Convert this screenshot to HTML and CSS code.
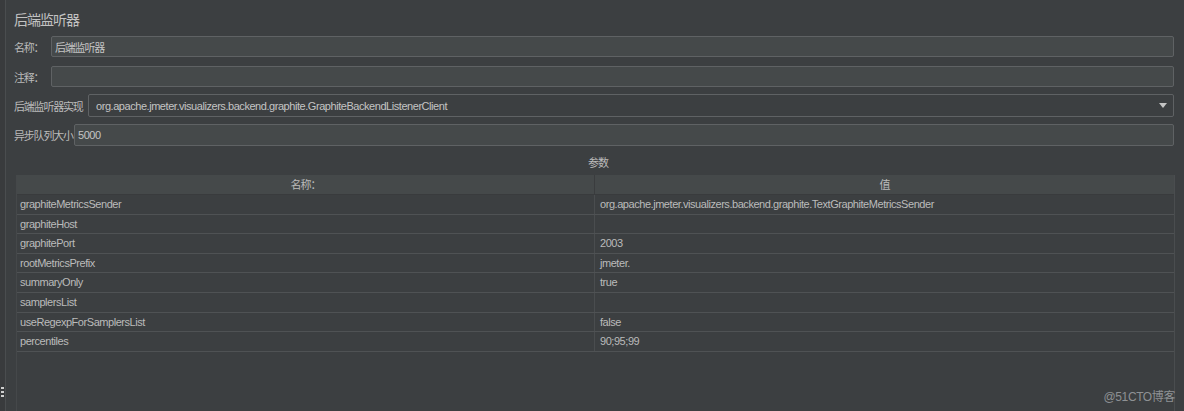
FILE: index.html
```html
<!DOCTYPE html>
<html lang="zh">
<head>
<meta charset="utf-8">
<title>后端监听器</title>
<link rel="stylesheet" href="styles.css">
</head>
<body>
<div class="app">
  <div class="splitter"><span class="grip"></span></div>
  <div class="main">
    <div class="title">后端监听器</div>
    <div class="field f-name">
      <label class="lbl">名称：</label>
      <div class="input">后端监听器</div>
    </div>
    <div class="field f-comment">
      <label class="lbl">注释：</label>
      <div class="input"></div>
    </div>
    <div class="field f-impl">
      <label class="lbl">后端监听器实现</label>
      <div class="input combo">
        <span>org.apache.jmeter.visualizers.backend.graphite.GraphiteBackendListenerClient</span>
        <svg class="arrow" width="8" height="5" viewBox="0 0 8 5"><path d="M0 0H8L4 5Z" fill="#c4c4c4"/></svg>
      </div>
    </div>
    <div class="field f-queue">
      <label class="lbl">异步队列大小</label>
      <div class="input">5000</div>
    </div>
    <div class="params-title">参数</div>
    <div class="table">
      <div class="thead">
        <div class="th">名称：</div>
        <div class="th">值</div>
      </div>
      <div class="row"><div class="td">graphiteMetricsSender</div><div class="td">org.apache.jmeter.visualizers.backend.graphite.TextGraphiteMetricsSender</div></div>
      <div class="row"><div class="td">graphiteHost</div><div class="td"></div></div>
      <div class="row"><div class="td">graphitePort</div><div class="td">2003</div></div>
      <div class="row"><div class="td">rootMetricsPrefix</div><div class="td">jmeter.</div></div>
      <div class="row"><div class="td">summaryOnly</div><div class="td">true</div></div>
      <div class="row"><div class="td">samplersList</div><div class="td"></div></div>
      <div class="row"><div class="td">useRegexpForSamplersList</div><div class="td">false</div></div>
      <div class="row"><div class="td">percentiles</div><div class="td">90;95;99</div></div>
    </div>
  </div>
  <div class="watermark">@51CTO博客</div>
</div>
</body>
</html>
```

FILE: styles.css
```css
* { box-sizing: border-box; }
html, body { margin: 0; padding: 0; }
body {
  background: #3c3f41;
  color: #bbbbbb;
  font-family: "Liberation Sans", Arial, "Noto Sans CJK SC", sans-serif;
  font-size: 11px;
  width: 1184px;
  height: 411px;
  overflow: hidden;
}
.app {
  position: relative;
  display: flex;
  height: 411px;
}
.splitter {
  width: 6px;
  flex: none;
  background: #393b3d;
  border-right: 1px solid #4a4d4f;
  display: flex;
  align-items: flex-end;
  padding-bottom: 14px;
}
.grip {
  display: block;
  width: 3px;
  height: 10px;
  margin-left: 1px;
  background: repeating-linear-gradient(#cfcfcf 0 2px, transparent 2px 4px);
}
.main {
  flex: 1;
  padding: 9px 10px 0 8px;
  display: flex;
  flex-direction: column;
}
.title {
  font-family: "Noto Sans CJK SC", sans-serif;
  font-size: 14px;
  line-height: 20px;
  height: 20px;
  letter-spacing: -1px;
  color: #c2c2c2;
}
.field {
  display: flex;
  align-items: center;
}
.lbl {
  font-family: "Noto Sans CJK SC", sans-serif;
  font-size: 11px;
  letter-spacing: -1.2px;
  white-space: nowrap;
  flex: none;
}
.f-name { margin-top: 7px; height: 21px; }
.f-name .lbl { width: 37px; }
.f-comment { margin-top: 9px; height: 21px; }
.f-comment .lbl { width: 37px; }
.f-impl { margin-top: 7px; height: 23px; }
.f-impl .lbl { width: 74px; }
.f-queue { margin-top: 7px; height: 22px; }
.f-queue .lbl { width: 60px; }
.input {
  flex: 1;
  height: 100%;
  background: #45494a;
  border: 1px solid #5f6264;
  border-radius: 2px;
  padding: 0 3px;
  display: flex;
  align-items: center;
  font-size: 11px;
  letter-spacing: -0.45px;
  white-space: nowrap;
  color: #c4c4c4;
}
.f-name .input { font-family: "Noto Sans CJK SC", sans-serif; letter-spacing: -1.2px; }
.combo {
  background: #3c3f41;
  padding-left: 7px;
  justify-content: space-between;
  padding-right: 6px;
}
.params-title {
  margin-top: 8px;
  height: 16px;
  line-height: 16px;
  text-align: center;
  font-family: "Noto Sans CJK SC", sans-serif;
  font-size: 11px;
  letter-spacing: -1px;
  padding-left: 8px;
}
.table {
  margin: 5px -1px 0 2px;
  flex: 1;
  border-left: 1px solid #45484a;
  border-right: 1px solid #4a4d4f;
}
.thead {
  display: grid;
  grid-template-columns: 577px 1fr;
  height: 20px;
  background: #45494a;
  border-bottom: 1px solid #393b3d;
}
.th {
  text-align: center;
  line-height: 19px;
  font-family: "Noto Sans CJK SC", sans-serif;
  letter-spacing: -1px;
}
.th + .th { border-left: 1px solid #3a3c3e; }
.row {
  display: grid;
  grid-template-columns: 577px 1fr;
  height: 19.6px;
  border-bottom: 1px solid #4f5254;
}
.td {
  padding-left: 3px;
  line-height: 19px;
  white-space: nowrap;
  overflow: hidden;
  letter-spacing: -0.45px;
}
.td + .td { border-left: 1px solid #4a4d4f; padding-left: 5px; }
.watermark {
  position: absolute;
  right: 9px;
  bottom: 7px;
  font-size: 12px;
  color: #8e9194;
  letter-spacing: -0.4px;
}
```
